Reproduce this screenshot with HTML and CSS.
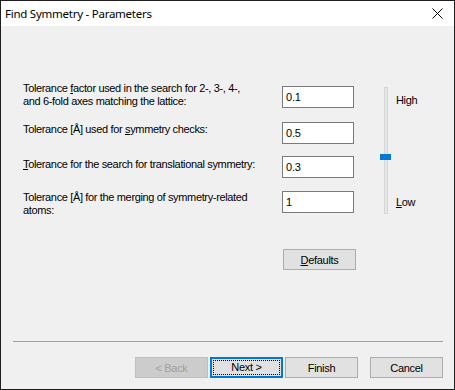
FILE: index.html
```html
<!DOCTYPE html>
<html>

<head>
    <title>Find Symmetry - Parameters</title>
    <link rel="stylesheet" href="styles.css">
</head>

<body>
    <div class="window">
        <div class="titlebar">
            <span class="title">Find Symmetry - Parameters</span>
            <svg class="close" width="11" height="11" viewBox="0 0 11 11">
                <path d="M0.5 0.5 L10.5 10.5 M10.5 0.5 L0.5 10.5" stroke="#000" stroke-width="1" fill="none"/>
            </svg>
        </div>

        <div class="content">
            <div class="form">
                <div class="fields">
                    <label class="lbl lbl-1">Tolerance <u>f</u>actor used in the search for 2-, 3-, 4-,<br>and 6-fold axes matching the lattice:</label>
                    <input class="box" type="text" value="0.1">

                    <label class="lbl lbl-2">Tolerance [Å] used for <u>s</u>ymmetry checks:</label>
                    <input class="box" type="text" value="0.5">

                    <label class="lbl lbl-3"><u>T</u>olerance for the search for translational symmetry:</label>
                    <input class="box" type="text" value="0.3">

                    <label class="lbl lbl-4">Tolerance [Å] for the merging of symmetry-related<br>atoms:</label>
                    <input class="box" type="text" value="1">

                    <span></span>
                    <button class="btn defaults"><u>D</u>efaults</button>
                </div>

                <div class="slider">
                    <div class="track"></div>
                    <div class="thumb"></div>
                </div>

                <div class="scale">
                    <span>High</span>
                    <span><u>L</u>ow</span>
                </div>
            </div>

            <div class="footer">
                <div class="separator"></div>
                <div class="buttons">
                    <button class="btn" disabled>&lt; Back</button>
                    <button class="btn focused"><span>Next &gt;</span></button>
                    <button class="btn">Finish</button>
                    <button class="btn cancel">Cancel</button>
                </div>
            </div>
        </div>
    </div>
</body>

</html>
```

FILE: styles.css
```css
body {
    margin: 0;
    font-family: "Liberation Sans", Arial, sans-serif;
    font-size: 11px;
    letter-spacing: -0.35px;
    color: #000;
}

.window {
    width: 455px;
    height: 390px;
    box-sizing: border-box;
    border: 1px solid #1f1f1f;
    display: flex;
    flex-direction: column;
    background: #f0f0f0;
}

.titlebar {
    height: 25px;
    background: #fff;
    display: flex;
    align-items: center;
    justify-content: space-between;
    padding: 0 11px 0 4px;
}

.title {
    font-family: "Noto Sans", sans-serif;
    font-size: 11.5px;
    letter-spacing: -0.25px;
    margin-top: -1px;
}

.close {
    margin-top: -1px;
}

.content {
    flex: 1;
    display: flex;
    flex-direction: column;
}

.form {
    display: flex;
    padding: 60px 0 0 22px;
}

.fields {
    display: grid;
    grid-template-columns: 259px 72px;
    grid-template-rows: 36px 34px 35px 58px 21px;
    align-items: start;
}

.lbl {
    line-height: 13px;
    white-space: nowrap;
}

.lbl-1 {
    margin-top: -4px;
}

.lbl-2 {
    margin-top: 1px;
}

.lbl-3 {
    margin-top: 2px;
}

.box {
    width: 72px;
    height: 22px;
    box-sizing: border-box;
    border: 1px solid #7a7a7a;
    background: #fff;
    font-family: "Liberation Sans", Arial, sans-serif;
    font-size: 11px;
    letter-spacing: -0.2px;
    padding: 0 3px;
    margin: 0;
    outline: none;
}

.btn {
    width: 73px;
    height: 21px;
    box-sizing: border-box;
    border: 1px solid #adadad;
    background: #e1e1e1;
    font-family: "Liberation Sans", Arial, sans-serif;
    font-size: 11px;
    letter-spacing: -0.3px;
    color: #000;
    padding: 0;
    margin: 0;
}

.btn:disabled {
    background: #cccccc;
    border-color: #bfbfbf;
    color: #a0a0a0;
}

.defaults {
    margin-left: 1px;
}

.focused {
    border: 2px solid #0078d7;
    padding: 1px;
}

.focused span {
    display: block;
    height: 100%;
    box-sizing: border-box;
    border: 1px dotted #000;
    line-height: 13px;
}

.slider {
    position: relative;
    width: 11px;
    height: 127px;
    margin: 1px 0 0 26px;
}

.track {
    width: 4px;
    height: 100%;
    box-sizing: border-box;
    margin-left: 4px;
    background: #e7e7e7;
    border: 1px solid #d6d6d6;
}

.thumb {
    position: absolute;
    left: 0;
    top: 67px;
    width: 11px;
    height: 6px;
    background: #0078d7;
}

.scale {
    display: flex;
    flex-direction: column;
    justify-content: space-between;
    height: 115px;
    margin: 8px 0 0 5px;
    line-height: 13px;
}

.footer {
    margin-top: auto;
    padding: 0 11px 11px 11px;
}

.separator {
    height: 1px;
    background: #a0a0a0;
    margin: 0 0 15px 1px;
}

.buttons {
    display: flex;
    justify-content: flex-end;
    gap: 2px;
}

.cancel {
    margin-left: 10px;
}
```
